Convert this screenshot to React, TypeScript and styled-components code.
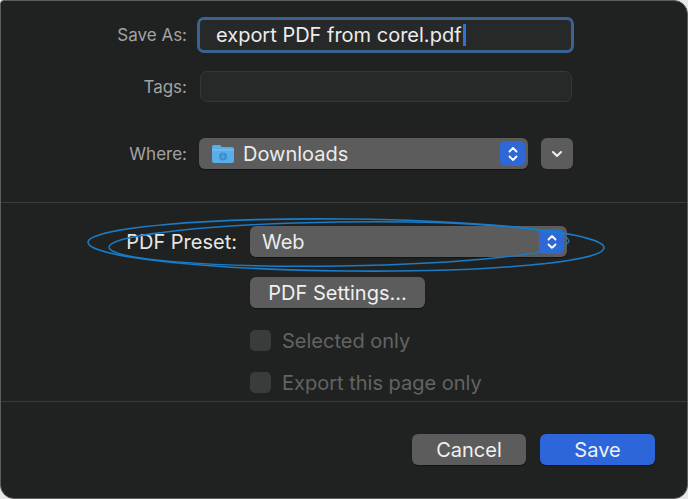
import React from "react";
import styled, { createGlobalStyle } from "styled-components";

const Global = createGlobalStyle`
  html, body { margin: 0; padding: 0; background: #e8e8e8; }
  body { font-family: "Inter", "Liberation Sans", sans-serif; }
`;

const Window = styled.div`
  position: relative;
  width: 688px;
  height: 499px;
  box-sizing: border-box;
  background: #202221;
  border: 1px solid #5c5e5d;
  border-radius: 4px 14px 14px 14px;
  display: flex;
  flex-direction: column;
  overflow: hidden;
`;

const Top = styled.div`
  display: grid;
  grid-template-columns: 186px 1fr;
  column-gap: 12px;
  align-items: center;
  padding: 16px 0 0 0;
`;

const Label = styled.div<{ $bright?: boolean; $mt?: number }>`
  text-align: right;
  margin-top: ${(p) => p.$mt ?? 0}px;
  font-size: ${(p) => (p.$bright ? "20px" : "17px")};
  color: ${(p) => (p.$bright ? "#e6e6e6" : "#a3a3a3")};
`;

const Row = styled.div<{ $h: number; $mt?: number }>`
  display: flex;
  align-items: center;
  height: ${(p) => p.$h}px;
  margin-top: ${(p) => p.$mt ?? 0}px;
`;

const TextField = styled.div<{ $focus?: boolean }>`
  box-sizing: border-box;
  width: ${(p) => (p.$focus ? 377 : 372)}px;
  margin-left: ${(p) => (p.$focus ? -2 : 1)}px;
  height: ${(p) => (p.$focus ? 36 : 31)}px;
  background: #272928;
  border-radius: 7px;
  border: ${(p) => (p.$focus ? "3.5px solid #3a6391" : "1px solid #363837")};
  padding-left: 16px;
  display: flex;
  align-items: center;
  font-size: 20px;
  color: #ececec;
`;

const Caret = styled.span`
  display: inline-block;
  width: 3px;
  height: 22px;
  background: #2f6fe0;
  margin-left: 1px;
`;

const Popup = styled.div<{ $w: number }>`
  box-sizing: border-box;
  width: ${(p) => p.$w}px;
  height: 31px;
  background: #5b5c5b;
  border-radius: 6px;
  display: flex;
  align-items: center;
  padding: 0 3px 0 12px;
  font-size: 20px;
  color: #ececec;
  gap: 8px;
  box-shadow: 0 1px 1px rgba(0,0,0,0.4);
`;

const Grow = styled.span`
  flex: 1;
`;

const Stepper = styled.div`
  width: 25px;
  height: 25px;
  border-radius: 5px;
  background: #2f68d6;
  display: flex;
  align-items: center;
  justify-content: center;
`;

const SquareBtn = styled.div`
  width: 32px;
  height: 31px;
  border-radius: 6px;
  background: #5b5c5b;
  margin-left: 13px;
  display: flex;
  align-items: center;
  justify-content: center;
`;

const Sep = styled.div`
  height: 1px;
  background: #3a3c3b;
`;

const Middle = styled.div`
  display: grid;
  grid-template-columns: 236px 1fr;
  column-gap: 13px;
  align-items: center;
  padding-top: 23px;
`;

const Button = styled.div<{ $primary?: boolean; $w: number }>`
  box-sizing: border-box;
  width: ${(p) => p.$w}px;
  height: 31px;
  border-radius: 6px;
  background: ${(p) => (p.$primary ? "#2d66db" : "#5b5c5b")};
  color: #f0f0f0;
  font-size: 20px;
  display: flex;
  align-items: center;
  justify-content: center;
  box-shadow: 0 1px 1px rgba(0,0,0,0.4);
`;

const Check = styled.div`
  display: flex;
  align-items: center;
  gap: 11px;
  font-size: 20px;
  color: #626463;
`;

const Box = styled.div`
  width: 21px;
  height: 21px;
  border-radius: 5px;
  background: #3a3c3b;
`;

const Footer = styled.div`
  display: flex;
  justify-content: flex-end;
  gap: 14px;
  padding: 32px 32px 0 0;
`;

const Annot = styled.svg`
  position: absolute;
  left: 80px;
  top: 210px;
  pointer-events: none;
`;

const StepIcon = () => (
  <svg width="12" height="18" viewBox="0 0 12 18">
    <path d="M2.5 6.5 L6 3 L9.5 6.5 M2.5 11.5 L6 15 L9.5 11.5" fill="none" stroke="#fff" strokeWidth="1.8" strokeLinecap="round" strokeLinejoin="round" />
  </svg>
);

export default function App() {
  return (
    <>
      <Global />
      <Window>
        <Top>
          <Label>Save As:</Label>
          <Row $h={36}>
            <TextField $focus>
              export PDF from corel.pdf<Caret />
            </TextField>
          </Row>
          <Label $mt={18}>Tags:</Label>
          <Row $h={31} $mt={18}>
            <TextField />
          </Row>
          <Label $mt={36}>Where:</Label>
          <Row $h={31} $mt={36}>
            <Popup $w={329}>
              <svg width="24" height="20" viewBox="0 0 24 20">
                <path d="M1 3 Q1 1 3 1 L9 1 L11 3 L21 3 Q23 3 23 5 L23 17 Q23 19 21 19 L3 19 Q1 19 1 17 Z" fill="#5aaee8" />
                <path d="M1 6 L23 6" stroke="#7cc3f2" strokeWidth="1" />
                <circle cx="12" cy="12.5" r="4" fill="#3d8fd0" />
                <path d="M12 10 L12 14 M10.5 12.8 L12 14.3 L13.5 12.8" stroke="#5aaee8" strokeWidth="1" fill="none" />
              </svg>
              <Grow>Downloads</Grow>
              <Stepper><StepIcon /></Stepper>
            </Popup>
            <SquareBtn>
              <svg width="12" height="8" viewBox="0 0 12 8">
                <path d="M2 2 L6 6 L10 2" fill="none" stroke="#eee" strokeWidth="2" strokeLinecap="round" strokeLinejoin="round" />
              </svg>
            </SquareBtn>
          </Row>
        </Top>
        <Row $h={0} $mt={33} />
        <Sep />
        <Middle>
          <Label $bright>PDF Preset:</Label>
          <Row $h={31}>
            <Popup $w={317}>
              <Grow>Web</Grow>
              <Stepper><StepIcon /></Stepper>
            </Popup>
          </Row>
          <div />
          <Row $h={31} $mt={20}>
            <Button $w={175}>PDF Settings...</Button>
          </Row>
          <div />
          <Row $h={21} $mt={22}>
            <Check><Box />Selected only</Check>
          </Row>
          <div />
          <Row $h={21} $mt={21}>
            <Check><Box />Export this page only</Check>
          </Row>
        </Middle>
        <Row $h={0} $mt={8} />
        <Sep />
        <Footer>
          <Button $w={114}>Cancel</Button>
          <Button $w={115} $primary>Save</Button>
        </Footer>
        <Annot width="560" height="70" viewBox="0 0 560 70">
          <ellipse cx="265" cy="34" rx="258" ry="26" fill="none" stroke="#1a7cc8" strokeWidth="1.6" transform="rotate(0.6 265 34)" />
          <ellipse cx="258" cy="33" rx="230" ry="22" fill="none" stroke="#1a7cc8" strokeWidth="1.4" transform="rotate(-0.8 258 33)" />
        </Annot>
      </Window>
    </>
  );
}
